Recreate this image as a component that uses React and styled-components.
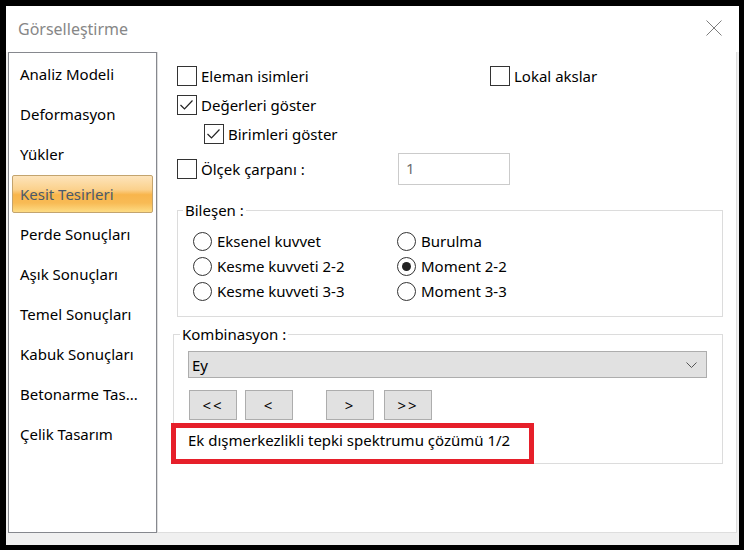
import React from "react";
import styled, { createGlobalStyle, css } from "styled-components";

const FONT = `"Noto Sans", "Open Sans", sans-serif`;

const GlobalStyle = createGlobalStyle`
  html, body { margin: 0; padding: 0; background: #000; }
  body { font-family: ${FONT}; font-size: 15px; color: #000; }
  * { box-sizing: border-box; }
`;

const Screen = styled.div`
  width: 744px;
  height: 550px;
  background: #000;
  padding: 6px 0 0 6px;
`;

const Dialog = styled.div`
  width: 733px;
  height: 539px;
  background: #fff;
  display: flex;
  flex-direction: column;
`;

const TitleBar = styled.div`
  height: 46px;
  flex: none;
  display: flex;
  align-items: center;
  justify-content: space-between;
  padding: 0 17px 0 12px;
`;

const Title = styled.span`
  font-size: 16px;
  color: #878787;
`;

const CloseButton = styled.span`
  display: flex;
  width: 16px;
  height: 16px;
  margin-top: -2px;
`;

const Body = styled.div`
  flex: 1;
  display: flex;
  background: #f0f0f0;
  padding: 0 2px 12px 2px;
`;

const Sidebar = styled.div`
  width: 149px;
  flex: none;
  background: #fff;
  border: 1px solid #86888e;
  display: flex;
  flex-direction: column;
  gap: 2px;
  padding: 2px 3px;
`;

const NavItem = styled.div`
  height: 38px;
  display: flex;
  align-items: center;
  padding-left: 7px;
  border: 1px solid transparent;
  border-radius: 2px;
  white-space: nowrap;
  color: #000;
  ${(p) =>
    p.$active &&
    css`
      border-color: #c3a46e;
      color: #4b5a6b;
      background: linear-gradient(
        to bottom,
        #fde4bb 0%,
        #fbd18c 38%,
        #f8b54c 52%,
        #f8bb55 75%,
        #fddc84 100%
      );
    `}
`;

const Panel = styled.div`
  flex: 1;
  background: #fff;
  border: 1px solid #dedede;
  border-top: none;
  padding: 14px 13px 0 15px;
  display: flex;
  flex-direction: column;
`;

const Options = styled.div`
  margin-left: 4px;
  display: flex;
  flex-direction: column;
  gap: 9px;
`;

const OptionRow = styled.div`
  display: flex;
  align-items: center;
  min-height: 20px;
  padding-left: ${(p) => p.$indent || 0}px;
`;

const OptionCell = styled.div`
  width: ${(p) => (p.$width ? `${p.$width}px` : "auto")};
  flex: none;
  display: flex;
  align-items: center;
`;

const CheckLabel = styled.label`
  display: inline-flex;
  align-items: center;
  gap: 4px;
  line-height: 20px;
  white-space: nowrap;
`;

const CheckBoxFrame = styled.span`
  width: 20px;
  height: 20px;
  flex: none;
  border: 1px solid #333;
  background: #fff;
  display: inline-flex;
  align-items: center;
  justify-content: center;
`;

const NumberInput = styled.div`
  width: 112px;
  height: 32px;
  border: 1px solid #cbcbcb;
  padding: 4px 7px;
  color: #6d6d6d;
  line-height: 20px;
`;

const GroupBox = styled.fieldset`
  margin: ${(p) => p.$top}px 0 0 ${(p) => p.$left}px;
  border: 1px solid #dcdcdc;
  padding: ${(p) => p.$pad};
  min-width: 0;
`;

const GroupLegend = styled.legend`
  padding: 0 2px;
  line-height: 20px;
  white-space: nowrap;
`;

const RadioGrid = styled.div`
  display: grid;
  grid-template-columns: 204px auto;
  row-gap: 5px;
  margin-left: 10px;
`;

const RadioLabel = styled.label`
  display: inline-flex;
  align-items: center;
  gap: 5px;
  height: 20px;
  white-space: nowrap;
`;

const RadioCircle = styled.span`
  width: 19px;
  height: 19px;
  flex: none;
  border: 1px solid #333;
  border-radius: 50%;
  background: #fff;
  display: inline-flex;
  align-items: center;
  justify-content: center;
  &::after {
    content: "";
    width: 9px;
    height: 9px;
    border-radius: 50%;
    background: #222;
    display: ${(p) => (p.$checked ? "block" : "none")};
  }
`;

const GroupContent = styled.div`
  margin: 0 15px 0 8px;
  display: flex;
  flex-direction: column;
`;

const Select = styled.div`
  height: 27px;
  background: #e1e1e1;
  border: 1px solid #adadad;
  display: flex;
  align-items: center;
  justify-content: space-between;
  padding: 0 9px 0 3px;
  line-height: 20px;
`;

const ButtonRow = styled.div`
  display: flex;
  margin-top: 12px;
  margin-left: 1px;
`;

const NavButton = styled.button`
  width: 48px;
  height: 30px;
  margin-left: ${(p) => p.$gap || 0}px;
  background: #e1e1e1;
  border: 1px solid #adadad;
  font-family: ${FONT};
  font-size: 15px;
  color: #000;
  padding: 0;
  letter-spacing: 2px;
`;

const ResultLine = styled.div`
  position: relative;
  height: 40px;
  margin-top: 3px;
  padding-top: 7px;
  line-height: 20px;
  white-space: nowrap;
`;

const Highlight = styled.span`
  position: absolute;
  left: -17px;
  top: 0;
  width: 363px;
  height: 41px;
  border: 5px solid #e61f2a;
  pointer-events: none;
`;

function CheckBox({ checked, children }) {
  return (
    <CheckLabel>
      <CheckBoxFrame>
        {checked && (
          <svg width="18" height="18" viewBox="0 0 18 18">
            <polyline points="2.5,9 6.5,13 14.5,4.5" fill="none" stroke="#222" strokeWidth="1.2" />
          </svg>
        )}
      </CheckBoxFrame>
      {children}
    </CheckLabel>
  );
}

function Radio({ checked, children }) {
  return (
    <RadioLabel>
      <RadioCircle $checked={checked} />
      {children}
    </RadioLabel>
  );
}

const navItems = [
  "Analiz Modeli",
  "Deformasyon",
  "Yükler",
  "Kesit Tesirleri",
  "Perde Sonuçları",
  "Aşık Sonuçları",
  "Temel Sonuçları",
  "Kabuk Sonuçları",
  "Betonarme Tas...",
  "Çelik Tasarım",
];

export default function App() {
  return (
    <>
      <GlobalStyle />
      <Screen>
        <Dialog>
          <TitleBar>
            <Title>Görselleştirme</Title>
            <CloseButton>
              <svg width="16" height="16" viewBox="0 0 16 16">
                <path d="M0.5 0.5 L15.5 15.5 M15.5 0.5 L0.5 15.5" stroke="#7d7d7d" strokeWidth="1" fill="none" />
              </svg>
            </CloseButton>
          </TitleBar>
          <Body>
            <Sidebar>
              {navItems.map((item) => (
                <NavItem key={item} $active={item === "Kesit Tesirleri"}>
                  {item}
                </NavItem>
              ))}
            </Sidebar>
            <Panel>
              <Options>
                <OptionRow>
                  <OptionCell $width={313}>
                    <CheckBox>Eleman isimleri</CheckBox>
                  </OptionCell>
                  <OptionCell>
                    <CheckBox>Lokal akslar</CheckBox>
                  </OptionCell>
                </OptionRow>
                <OptionRow>
                  <CheckBox checked>Değerleri göster</CheckBox>
                </OptionRow>
                <OptionRow $indent={27}>
                  <CheckBox checked>Birimleri göster</CheckBox>
                </OptionRow>
                <OptionRow>
                  <OptionCell $width={221}>
                    <CheckBox>Ölçek çarpanı :</CheckBox>
                  </OptionCell>
                  <NumberInput>1</NumberInput>
                </OptionRow>
              </Options>

              <GroupBox $top={15} $left={4} $pad="11px 0 15px 5px">
                <GroupLegend>Bileşen :</GroupLegend>
                <RadioGrid>
                  <Radio>Eksenel kuvvet</Radio>
                  <Radio>Burulma</Radio>
                  <Radio>Kesme kuvveti 2-2</Radio>
                  <Radio checked>Moment 2-2</Radio>
                  <Radio>Kesme kuvveti 3-3</Radio>
                  <Radio>Moment 3-3</Radio>
                </RadioGrid>
              </GroupBox>

              <GroupBox $top={7} $left={0} $pad="7px 0 0 6px">
                <GroupLegend>Kombinasyon :</GroupLegend>
                <GroupContent>
                  <Select>
                    <span>Ey</span>
                    <svg width="11" height="6" viewBox="0 0 11 6">
                      <polyline points="0.5,0.5 5.5,5.5 10.5,0.5" fill="none" stroke="#555" strokeWidth="1" />
                    </svg>
                  </Select>
                  <ButtonRow>
                    <NavButton>&lt;&lt;</NavButton>
                    <NavButton $gap={8}>&lt;</NavButton>
                    <NavButton $gap={33}>&gt;</NavButton>
                    <NavButton $gap={10}>&gt;&gt;</NavButton>
                  </ButtonRow>
                  <ResultLine>
                    Ek dışmerkezlikli tepki spektrumu çözümü 1/2
                    <Highlight />
                  </ResultLine>
                </GroupContent>
              </GroupBox>
            </Panel>
          </Body>
        </Dialog>
      </Screen>
    </>
  );
}
